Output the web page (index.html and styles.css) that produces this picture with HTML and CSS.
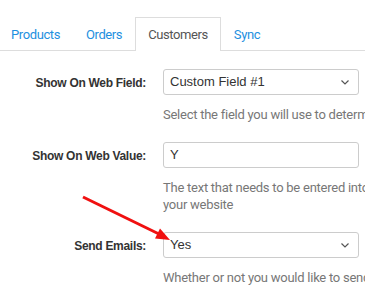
FILE: index.html
```html
<!DOCTYPE html>
<html lang="en">
<head>
    <meta charset="UTF-8">
    <meta name="viewport" content="width=device-width, initial-scale=1.0">
    <title>Settings - Customers</title>
    <link rel="stylesheet" href="styles.css">
</head>
<body>
    <ul class="tabs">
        <li><a href="#">Products</a></li>
        <li><a href="#">Orders</a></li>
        <li class="active"><a href="#">Customers</a></li>
        <li><a href="#">Sync</a></li>
    </ul>

    <div class="form">
        <div class="row">
            <label class="label">Show On Web Field:</label>
            <div class="field">
                <div class="select">
                    <span>Custom Field #1</span>
                    <svg class="chevron" width="8" height="5" viewBox="0 0 8 5"><path d="M0.5 0.5 L4 4 L7.5 0.5" fill="none" stroke="#555" stroke-width="1.2"/></svg>
                </div>
                <p class="help">Select the field you will use to determine whether a customer shows on web</p>
            </div>
        </div>
        <div class="row">
            <label class="label">Show On Web Value:</label>
            <div class="field">
                <div class="input">Y</div>
                <p class="help">The text that needs to be entered into the selected field for it to show on<br>your website</p>
            </div>
        </div>
        <div class="row">
            <label class="label">Send Emails:</label>
            <div class="field">
                <div class="select">
                    <span>Yes</span>
                    <svg class="chevron" width="8" height="5" viewBox="0 0 8 5"><path d="M0.5 0.5 L4 4 L7.5 0.5" fill="none" stroke="#555" stroke-width="1.2"/></svg>
                </div>
                <p class="help">Whether or not you would like to send emails to customers</p>
            </div>
        </div>
    </div>

    <!-- annotation arrow drawn over the form -->
    <svg class="arrow" width="365" height="291" viewBox="0 0 365 291">
        <line x1="83" y1="197" x2="159" y2="234" stroke="#f01010" stroke-width="3"/>
        <polygon points="170,240 155,238.5 160,228.5" fill="#f01010"/>
    </svg>
</body>
</html>
```

FILE: styles.css
```css
html, body {
    margin: 0;
    padding: 0;
    overflow: hidden;
    background-color: #fff;
}

body {
    font-family: Roboto, "Liberation Sans", sans-serif;
    font-size: 13px;
    color: #333;
    width: 365px;
    height: 291px;
    position: relative;
}

.tabs {
    list-style: none;
    margin: 17px 0 0 0;
    padding: 0;
    display: flex;
    border-bottom: 1px solid #ddd;
    height: 33px;
}

.tabs li {
    margin-bottom: -1px;
}

.tabs a {
    display: block;
    box-sizing: border-box;
    height: 34px;
    line-height: 33px;
    padding: 0 12px;
    color: #1e90e0;
    text-decoration: none;
    font-size: 13px;
    letter-spacing: -0.4px;
    border: 1px solid transparent;
    border-bottom: none;
}

.tabs li:first-child a {
    padding-left: 10px;
}

.tabs li.active a {
    color: #555;
    border-color: #ddd;
    background-color: #fff;
}

.form {
    padding-top: 18px;
    width: 700px;
}

.row {
    display: flex;
    margin-bottom: 19px;
}

.label {
    width: 146px;
    flex-shrink: 0;
    text-align: right;
    font-family: "Liberation Sans", Arial, sans-serif;
    font-weight: bold;
    font-size: 12px;
    letter-spacing: -0.3px;
    color: #333;
    line-height: 27px;
    padding-top: 1px;
    padding-right: 17px;
}

.field {
    flex: 1;
}

.select, .input {
    width: 196px;
    height: 26px;
    box-sizing: border-box;
    border: 1px solid #ccc;
    border-radius: 3px;
    padding: 0 9px 0 6px;
    font-family: "Liberation Sans", Arial, sans-serif;
    font-size: 13px;
    color: #333;
    line-height: 24px;
}

.select {
    display: flex;
    justify-content: space-between;
    align-items: center;
}

.chevron {
    display: block;
}

.help {
    margin: 11px 0 0 0;
    color: #777;
    font-size: 13px;
    letter-spacing: -0.25px;
    line-height: 17px;
    white-space: nowrap;
}

.arrow {
    position: absolute;
    left: 0;
    top: 0;
    pointer-events: none;
}
```
